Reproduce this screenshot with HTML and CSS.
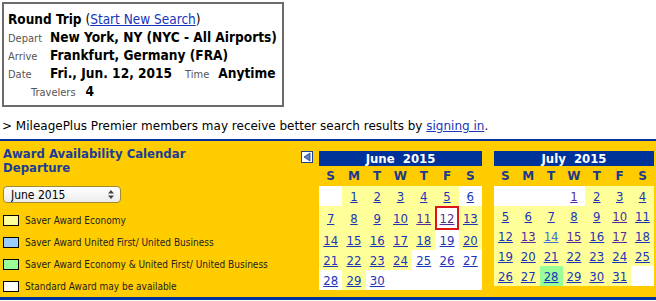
FILE: index.html
```html
<!DOCTYPE html>
<html lang="en">
<head>
    <meta charset="UTF-8">
    <title>Award Availability Calendar</title>
    <link rel="stylesheet" href="styles.css">
</head>
<body>
    <div class="trip">
        <div class="trip-title"><b>Round Trip</b> (<a href="#">Start New Search</a>)</div>
        <div class="trip-row"><span class="lbl">Depart</span><span class="val">New York, NY (NYC - All Airports)</span></div>
        <div class="trip-row"><span class="lbl">Arrive</span><span class="val">Frankfurt, Germany (FRA)</span></div>
        <div class="trip-row"><span class="lbl">Date</span><span class="val">Fri., Jun. 12, 2015</span><span class="lbl time">Time</span><span class="val">Anytime</span></div>
        <div class="trip-row travelers"><span class="lbl">Travelers</span><span class="val">4</span></div>
    </div>

    <p class="notice">&gt; MileagePlus Premier members may receive better search results by <a href="#">signing in</a>.</p>

    <div class="panel">
        <div class="legend-col">
            <h2>Award Availability Calendar<br>Departure</h2>
            <div class="select-wrap">
                <select>
                    <option selected>June 2015</option>
                    <option>July 2015</option>
                </select>
                <svg class="select-arrow" width="6" height="9" viewBox="0 0 6 9"><path d="M0 3.5 L3 0 L6 3.5 Z M0 5.5 L3 9 L6 5.5 Z" fill="#444"/></svg>
            </div>
            <ul class="legend">
                <li><span class="swatch economy"></span>Saver Award Economy</li>
                <li><span class="swatch first"></span>Saver Award United First/ United Business</li>
                <li><span class="swatch both"></span>Saver Award Economy &amp; United First/ United Business</li>
                <li><span class="swatch standard"></span>Standard Award may be available</li>
            </ul>
        </div>

        <a href="#" class="prev">
            <svg width="12" height="12" viewBox="0 0 12 12">
                <rect x="0.5" y="0.5" width="11" height="11" fill="#fff" stroke="#1c3f99"/>
                <path d="M9 2 L9 10 L3 6 Z" fill="#5d7fc4" stroke="#1c3f99" stroke-width="0.8"/>
            </svg>
        </a>

        <table class="cal june">
            <tr><th colspan="7" class="month">June&nbsp; 2015</th></tr>
            <tr class="dow"><th>S</th><th>M</th><th>T</th><th>W</th><th>T</th><th>F</th><th>S</th></tr>
            <tr><td></td><td class="av"><a href="#">1</a></td><td class="av"><a href="#">2</a></td><td class="av"><a href="#">3</a></td><td class="av"><a href="#">4</a></td><td class="av"><a href="#">5</a></td><td><a href="#">6</a></td></tr>
            <tr><td class="av"><a href="#">7</a></td><td class="av"><a href="#">8</a></td><td class="av"><a href="#">9</a></td><td class="av"><a href="#">10</a></td><td class="av"><a href="#" class="seen">11</a></td><td class="sel"><a href="#" class="seen">12</a></td><td class="av"><a href="#">13</a></td></tr>
            <tr><td class="av"><a href="#">14</a></td><td class="av"><a href="#">15</a></td><td class="av"><a href="#">16</a></td><td class="av"><a href="#">17</a></td><td class="av"><a href="#">18</a></td><td><a href="#">19</a></td><td class="av"><a href="#">20</a></td></tr>
            <tr><td class="av"><a href="#">21</a></td><td class="av"><a href="#">22</a></td><td class="av"><a href="#">23</a></td><td class="av"><a href="#">24</a></td><td><a href="#">25</a></td><td><a href="#">26</a></td><td><a href="#">27</a></td></tr>
            <tr><td><a href="#">28</a></td><td class="av"><a href="#">29</a></td><td><a href="#">30</a></td><td></td><td></td><td></td><td></td></tr>
        </table>

        <table class="cal july">
            <tr><th colspan="7" class="month">July&nbsp; 2015</th></tr>
            <tr class="dow"><th>S</th><th>M</th><th>T</th><th>W</th><th>T</th><th>F</th><th>S</th></tr>
            <tr><td></td><td></td><td></td><td><a href="#" class="seen">1</a></td><td class="av"><a href="#">2</a></td><td class="av"><a href="#">3</a></td><td class="av"><a href="#">4</a></td></tr>
            <tr><td class="av"><a href="#">5</a></td><td class="av"><a href="#">6</a></td><td class="av"><a href="#">7</a></td><td class="av"><a href="#">8</a></td><td class="av"><a href="#">9</a></td><td class="av"><a href="#" class="seen">10</a></td><td class="av"><a href="#">11</a></td></tr>
            <tr><td class="av"><a href="#">12</a></td><td class="av"><a href="#" class="seen">13</a></td><td class="av"><a href="#" class="hover">14</a></td><td class="av"><a href="#" class="seen">15</a></td><td class="av"><a href="#">16</a></td><td class="av"><a href="#" class="seen">17</a></td><td class="av"><a href="#">18</a></td></tr>
            <tr><td class="av"><a href="#">19</a></td><td class="av"><a href="#">20</a></td><td class="av"><a href="#">21</a></td><td class="av"><a href="#">22</a></td><td class="av"><a href="#">23</a></td><td class="av"><a href="#">24</a></td><td class="av"><a href="#">25</a></td></tr>
            <tr><td class="av"><a href="#">26</a></td><td class="av"><a href="#">27</a></td><td class="both"><a href="#">28</a></td><td class="av"><a href="#">29</a></td><td class="av"><a href="#">30</a></td><td class="av"><a href="#">31</a></td><td></td></tr>
        </table>
    </div>
</body>
</html>
```

FILE: styles.css
```css
body {
    margin: 0;
    font-family: "DejaVu Sans Condensed", "DejaVu Sans", sans-serif;
    color: #000;
    background: #fff;
}

a {
    color: #1a35b8;
}

.trip {
    width: 282px;
    height: 105px;
    margin: 2px 0 0 2px;
    padding: 6px 0 0 4px;
    border: 2px solid #6b6b6b;
    box-sizing: border-box;
}

.trip-title {
    font-size: 13.5px;
    line-height: 18px;
}

.trip-row {
    display: flex;
    align-items: baseline;
    height: 18px;
    line-height: 18px;
}

.lbl {
    width: 42px;
    font-size: 11px;
    color: #555;
}

.val {
    font-size: 13.6px;
    font-weight: bold;
}

.lbl.time {
    width: auto;
    margin: 0 9px 0 13px;
}

.travelers {
    padding-left: 23px;
}

.travelers .lbl {
    width: auto;
    margin-right: 10px;
}

.notice {
    margin: 11px 0 5px 2px;
    font-family: "DejaVu Sans", sans-serif;
    font-size: 12px;
    line-height: 16px;
}

.panel {
    display: flex;
    align-items: flex-start;
    height: 156px;
    background: #ffcc00;
    border-top: 2px solid #003399;
    border-bottom: 3px solid #003399;
}

.legend-col {
    flex-shrink: 0;
    width: 298px;
    padding: 6px 0 0 3px;
    box-sizing: border-box;
}

h2 {
    margin: 0;
    font-size: 13px;
    line-height: 14px;
    color: #1c3c99;
}

.select-wrap {
    position: relative;
    width: 118px;
    margin-top: 11px;
}

select {
    appearance: none;
    display: block;
    width: 118px;
    height: 17px;
    padding: 0 0 0 7px;
    font-family: inherit;
    font-size: 12px;
    color: #000;
    border: 1px solid #a08a3a;
    border-radius: 4px;
    background: linear-gradient(#ffffff, #ececec);
}

.select-arrow {
    position: absolute;
    right: 7px;
    top: 4px;
}

.legend {
    list-style: none;
    margin: 7px 0 0;
    padding: 0;
}

.legend li {
    display: flex;
    align-items: center;
    height: 21.8px;
    font-size: 10px;
    color: #222;
}

.swatch {
    width: 14px;
    height: 9px;
    margin-right: 6px;
    border: 1px solid #000;
}

.economy { background: #ffff99; }
.first { background: #99ccff; }
.both { background: #99ff99; }
.standard { background: #fff; }

.prev {
    flex-shrink: 0;
    display: block;
    margin: 10px 6px 0 3px;
    line-height: 0;
}

.cal {
    flex-shrink: 0;
    margin-top: 10px;
    border-spacing: 0;
    table-layout: fixed;
}

.cal.june {
    width: 163px;
    margin-right: 12px;
}

.cal.july {
    width: 160px;
}

.month {
    height: 15px;
    padding: 0;
    background: #003399;
    color: #fff;
    font-size: 13px;
    line-height: 15px;
}

.dow th {
    height: 20px;
    padding: 0;
    font-family: "DejaVu Sans", sans-serif;
    font-size: 12px;
    color: #1c3a8c;
}

.cal td {
    height: 20px;
    padding: 0;
    background: #fff;
    text-align: center;
    font-size: 13px;
}

.cal td.av { background: #ffff99; }
.cal td.both { background: #99ff99; }

.cal td.sel {
    border: 2px solid #e0141b;
}

.cal a.seen { color: #5a2a9c; }
.cal a.hover { color: #3b6fd6; }
```
